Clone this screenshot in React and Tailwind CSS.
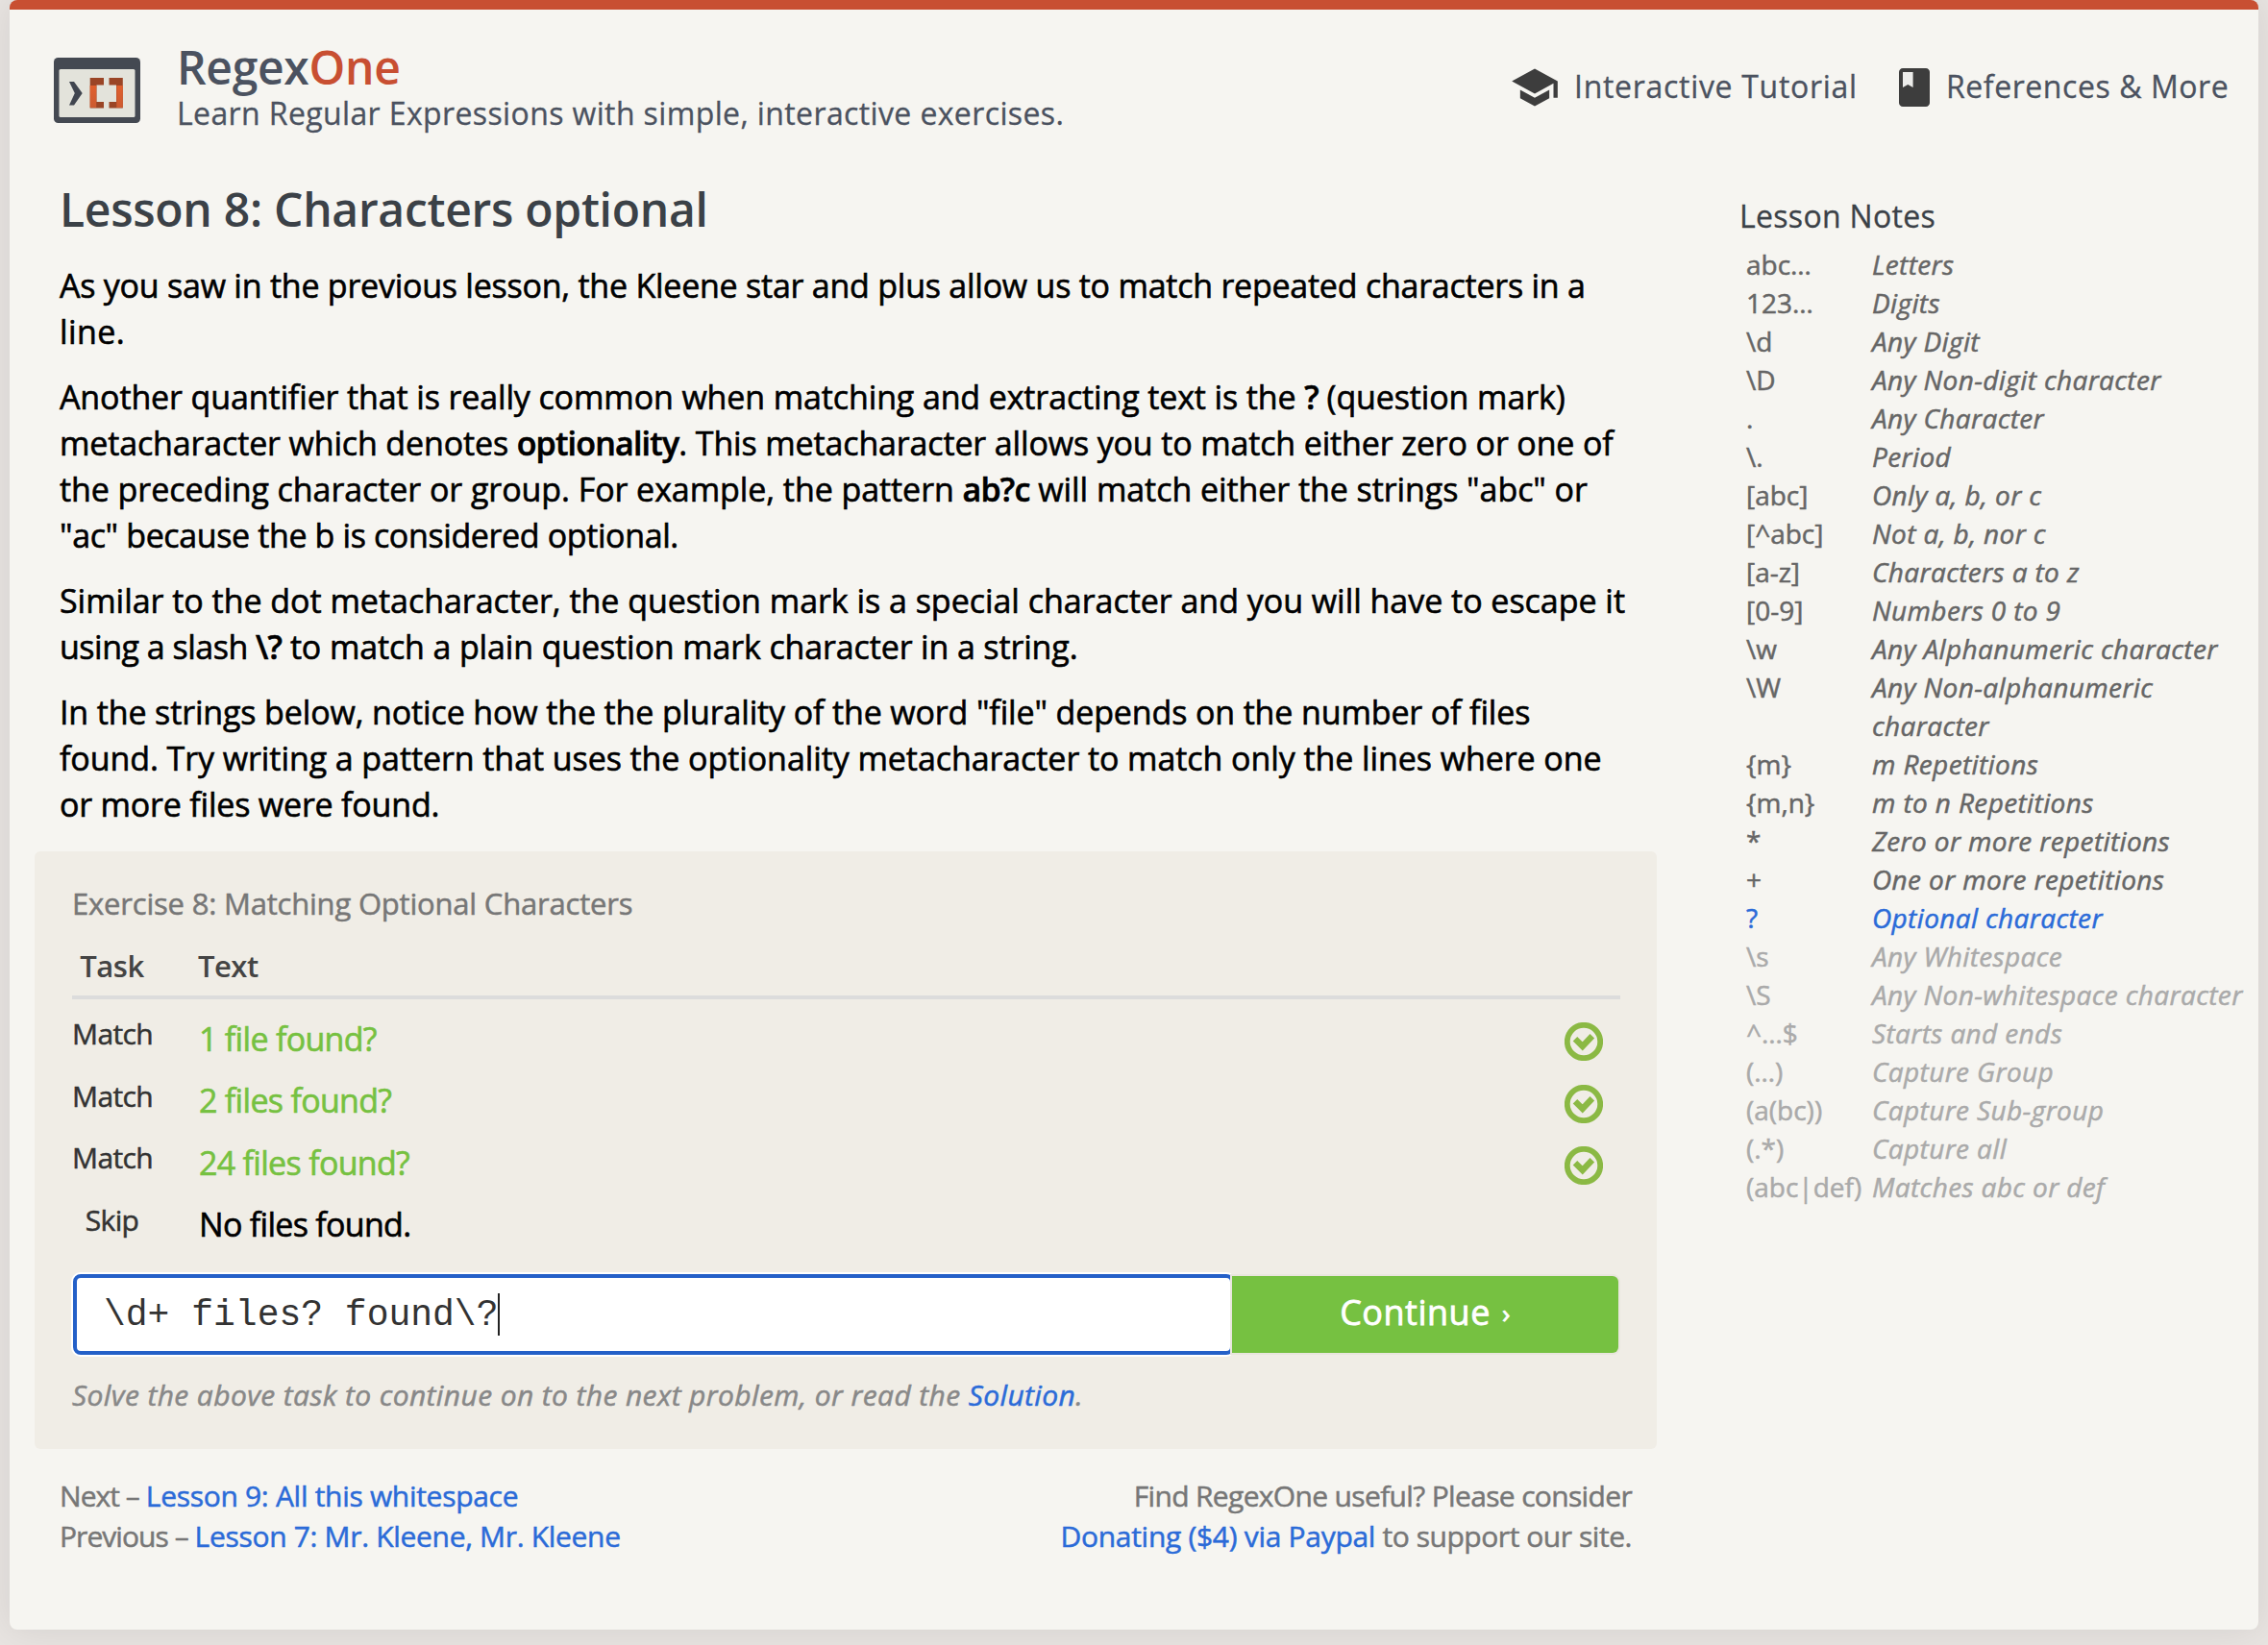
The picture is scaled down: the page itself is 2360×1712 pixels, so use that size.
import React from "react";

function Strong({ children }) {
  return <b className="font-semibold tracking-[-0.8px]">{children}</b>;
}

const paragraphs = [
  [
    { cls: "tracking-[-0.24px]", text: "As you saw in the previous lesson, the Kleene star and plus allow us to match repeated characters in a" },
    { cls: "tracking-[0.4px]", text: "line." },
  ],
  [
    { cls: "tracking-[-0.13px]", text: <>Another quantifier that is really common when matching and extracting text is the <Strong>?</Strong> (question mark)</> },
    { cls: "tracking-[-0.15px]", text: <>metacharacter which denotes <Strong>optionality</Strong>. This metacharacter allows you to match either zero or one of</> },
    { cls: "tracking-[-0.07px]", text: <>the preceding character or group. For example, the pattern <Strong>ab?c</Strong> will match either the strings "abc" or</> },
    { cls: "tracking-[-0.38px]", text: '"ac" because the b is considered optional.' },
  ],
  [
    { cls: "tracking-[-0.03px]", text: "Similar to the dot metacharacter, the question mark is a special character and you will have to escape it" },
    { cls: "tracking-[-0.14px]", text: <><span className="tracking-[-0.5px]">using a slash </span><Strong>\?</Strong> to match a plain question mark character in a string.</> },
  ],
  [
    { cls: "tracking-[-0.14px]", text: 'In the strings below, notice how the the plurality of the word "file" depends on the number of files' },
    { cls: "tracking-[-0.08px]", text: "found. Try writing a pattern that uses the optionality metacharacter to match only the lines where one" },
    { cls: "tracking-[-0.2px]", text: "or more files were found." },
  ],
];

const tasks = [
  { task: "Match", text: "1 file found?", done: true },
  { task: "Match", text: "2 files found?", done: true },
  { task: "Match", text: "24 files found?", done: true },
  { task: "Skip", text: "No files found.", done: false },
];

const learned = "text-[#666666]";
const current = "text-[#2b6bd8]";
const upcoming = "text-[#aaaaaa]";

const notes = [
  ["abc…", ["Letters"], learned],
  ["123…", ["Digits"], learned],
  ["\\d", ["Any Digit"], learned],
  ["\\D", ["Any Non-digit character"], learned],
  [".", ["Any Character"], learned],
  ["\\.", ["Period"], learned],
  ["[abc]", ["Only a, b, or c"], learned],
  ["[^abc]", ["Not a, b, nor c"], learned],
  ["[a-z]", ["Characters a to z"], learned],
  ["[0-9]", ["Numbers 0 to 9"], learned],
  ["\\w", ["Any Alphanumeric character"], learned],
  ["\\W", ["Any Non-alphanumeric", "character"], learned],
  ["{m}", ["m Repetitions"], learned],
  ["{m,n}", ["m to n Repetitions"], learned],
  ["*", ["Zero or more repetitions"], learned],
  ["+", ["One or more repetitions"], learned],
  ["?", ["Optional character"], current],
  ["\\s", ["Any Whitespace"], upcoming],
  ["\\S", ["Any Non-whitespace character"], upcoming],
  ["^…$", ["Starts and ends"], upcoming],
  ["(…)", ["Capture Group"], upcoming],
  ["(a(bc))", ["Capture Sub-group"], upcoming],
  ["(.*)", ["Capture all"], upcoming],
  ["(abc|def)", ["Matches abc or def"], upcoming],
];

function Logo() {
  return (
    <svg width="90" height="68" viewBox="0 0 90 68" className="shrink-0">
      <defs>
        <linearGradient id="stem" x1="0" y1="0" x2="0" y2="1">
          <stop offset="0" stopColor="#e0602e" />
          <stop offset="1" stopColor="#cc5a30" />
        </linearGradient>
      </defs>
      <rect width="90" height="68" rx="4.5" fill="#444952" />
      <rect x="5.5" y="12" width="79" height="50" rx="1.5" fill="#e3e3db" />
      <path d="M16 25h5L29.700 37l-8.700 12.500h-5L21.800 37z" fill="#40454f" />
      <path d="M37.700 21H52v7.500h-7.500v17.500H52v6.500H37.700z" fill="#9a4526" />
      <path d="M71.800 21H57.500v7.500H65v17.500h-7.500v6.500h14.300z" fill="#9a4526" />
      <rect x="37.700" y="29" width="6.500" height="23" fill="url(#stem)" />
      <rect x="65.300" y="29" width="6.500" height="23" fill="url(#stem)" />
    </svg>
  );
}

function SchoolIcon() {
  return (
    <svg width="52" height="52" viewBox="0 0 24 24" fill="#3d3d3d" className="shrink-0">
      <path d="M5 13.180v4L12 21l7-3.820v-4L12 17l-7-3.820zM12 3L1 9l11 6 9-4.910V17h2V9L12 3z" />
    </svg>
  );
}

function BookIcon() {
  return (
    <svg width="48" height="48" viewBox="0 0 24 24" className="shrink-0">
      <path d="M18 2H6c-1.100 0-2 .9-2 2v16c0 1.100.9 2 2 2h12c1.100 0 2-.9 2-2V4c0-1.100-.9-2-2-2z" fill="#3d3d3d" />
      <path d="M6 4h5.300v8l-2.650-1.500L6 12z" fill="#ececea" />
    </svg>
  );
}

function CheckIcon() {
  return (
    <svg width="40" height="40" viewBox="0 0 40 40" fill="none" stroke="#8bb944" className="shrink-0">
      <circle cx="20" cy="20" r="17.200" strokeWidth="5.800" />
      <path d="M11 17.300L18.700 24.900L28.800 14.300" strokeWidth="6.400" />
    </svg>
  );
}

function Header() {
  return (
    <header className="flex h-[160px] items-start justify-between pl-[46px] pr-8 text-[#4b5260]">
      <div className="flex">
        <div className="pt-[50px]"><Logo /></div>
        <div className="ml-[38px] pt-[31.5px] whitespace-nowrap">
          <h1 className="text-[48px] leading-[56px] font-semibold tracking-[-0.3px]">
            Regex<span className="text-[#c84f32]">One</span>
          </h1>
          <p className="text-[32px] leading-10 tracking-[0.38px] [-webkit-text-stroke:0.3px]">
            Learn Regular Expressions with simple, interactive exercises.
          </p>
        </div>
      </div>
      <nav className="flex h-[52px] mt-[55px] items-center text-[32px] leading-10 whitespace-nowrap [-webkit-text-stroke:0.3px]">
        <SchoolIcon />
        <span className="ml-[15px] w-[296px] pb-[3px] tracking-[0.7px]">Interactive Tutorial</span>
        <span className="ml-[34px] flex"><BookIcon /></span>
        <span className="ml-[9px] w-[293px] pb-[3px] tracking-[0.56px]">References &amp; More</span>
      </nav>
    </header>
  );
}

function Exercise() {
  return (
    <section className="mt-[25px] ml-[-26px] h-[622px] w-[1688px] rounded-md bg-[#f0ede6] pr-10 pl-[39px] pt-[34px] whitespace-nowrap">
      <h3 className="text-[31px] leading-10 tracking-[-0.2px] text-[#777777] [-webkit-text-stroke:0.5px]">
        Exercise 8: Matching Optional Characters
      </h3>
      <div className="mt-[23px] flex w-[1611px] border-b-4 border-[#dcdcdc] pb-[9px] text-[31px] leading-[44px] font-semibold tracking-[-0.5px] text-[#444444]">
        <span className="w-[83px] text-center">Task</span>
        <span className="ml-[48px]">Text</span>
      </div>
      <div className="h-[268px] w-[1611px] pt-2">
        {tasks.map((t, i) => (
          <div key={i} className="flex h-[64.67px] items-start">
            <span className="w-[83px] pt-1 text-center text-[30px] leading-[48px] tracking-[-0.6px] text-[#333333] [-webkit-text-stroke:0.5px]">{t.task}</span>
            <span className={`ml-[49px] pt-[8.5px] text-[34px] leading-[48px] tracking-[-0.7px] [-webkit-text-stroke:0.6px] ${t.done ? "text-[#76c141]" : "text-black"}`}>{t.text}</span>
            {t.done && <span className="mr-[18px] ml-auto pt-4"><CheckIcon /></span>}
          </div>
        ))}
      </div>
      <div className="mt-[18px] ml-px flex h-[84px] items-center">
        <div className="flex h-[84px] w-[1208px] items-center rounded-lg border-4 border-[#2460c8] bg-white pl-[28px] shadow-[0_0_0_2px_#ffffff]">
          <span className="pt-0.5 font-['Liberation_Mono',monospace] text-[38px] leading-[44px] text-[#333333]">\d+ files? found\?</span>
          <span className="h-11 w-0.5 bg-[#222222]" />
        </div>
        <button className="relative -ml-0.5 flex h-20 w-[402px] items-center justify-center rounded-r-md bg-[#76c141] pb-1 text-[36px] leading-[48px] tracking-[0.5px] text-white shadow-[0_0_0_2px_#e9e6de] [-webkit-text-stroke:0.8px]">
          Continue<span className="ml-3 text-[28px]">›</span>
        </button>
      </div>
      <p className="mt-[21px] text-[30px] leading-[42px] tracking-[0.38px] text-[#888888] italic [-webkit-text-stroke:0.5px]">
        Solve the above task to continue on to the next problem, or read the <a className="text-[#2b6bd8]">Solution</a>.
      </p>
    </section>
  );
}

function Notes() {
  return (
    <aside className="ml-[86px] pt-[35px] whitespace-nowrap">
      <h3 className="text-[32px] leading-10 tracking-[0.31px] text-[#3b4147] [-webkit-text-stroke:0.3px]">Lesson Notes</h3>
      <div className="mt-[10px] ml-[7px] text-[28px] leading-10 [-webkit-text-stroke:0.5px]">
        {notes.map(([code, lines, color]) => (
          <div key={code} className={`flex ${color}`}>
            <span className="w-[131px] shrink-0">{code}</span>
            <div className="tracking-[0.37px] italic">
              {lines.map((l) => <div key={l}>{l}</div>)}
            </div>
          </div>
        ))}
      </div>
    </aside>
  );
}

export default function App() {
  return (
    <div className="h-[1712px] w-[2360px] overflow-hidden bg-[#e8e4e1] pl-[10px] font-['Open_Sans',sans-serif]">
      <div className="h-[1696px] w-[2340px] rounded-lg border-t-[10px] border-[#c84f32] bg-[#f6f5f1] shadow-[0_0_40px_rgba(0,0,0,0.09)]">
        <Header />
        <div className="flex">
          <main className="w-[1662px] ml-[52px] pt-4 whitespace-nowrap">
            <h2 className="text-[48px] leading-[64px] font-semibold tracking-[-0.28px] text-[#3b4147]">Lesson 8: Characters optional</h2>
            <div className="mt-[23px] flex flex-col gap-5 text-[34px] leading-[48px] text-black [-webkit-text-stroke:0.6px]">
              {paragraphs.map((lines, i) => (
                <div key={i}>
                  {lines.map((l, j) => <p key={j} className={l.cls}>{l.text}</p>)}
                </div>
              ))}
            </div>
            <Exercise />
            <footer className="mt-[28px] flex w-[1636px] justify-between text-[30px] leading-[42px] text-[#777777] [-webkit-text-stroke:0.5px]">
              <div className="tracking-[-0.95px]">
                <p>Next – <a className="tracking-[-0.3px] text-[#2b6bd8]">Lesson 9: All this whitespace</a></p>
                <p>Previous – <a className="tracking-[-0.32px] text-[#2b6bd8]">Lesson 7: Mr. Kleene, Mr. Kleene</a></p>
              </div>
              <div className="text-right">
                <p className="tracking-[-0.66px]">Find RegexOne useful? Please consider</p>
                <p className="tracking-[-0.45px]"><a className="tracking-[-0.3px] text-[#2b6bd8]">Donating ($4) via Paypal</a> to support our site.</p>
              </div>
            </footer>
          </main>
          <Notes />
        </div>
      </div>
    </div>
  );
}
